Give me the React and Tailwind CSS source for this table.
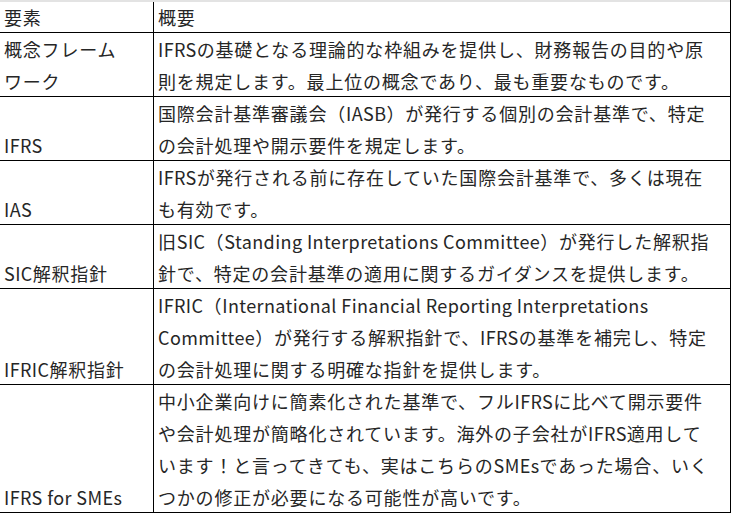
import React from "react";

const rows = [
  { left: ["概念フレーム", "ワーク"], right: ["IFRSの基礎となる理論的な枠組みを提供し、財務報告の目的や原", "則を規定します。最上位の概念であり、最も重要なものです。"], h: "h-[64px]" },
  { left: ["IFRS"], right: ["国際会計基準審議会（IASB）が発行する個別の会計基準で、特定", "の会計処理や開示要件を規定します。"], h: "h-[64px]" },
  { left: ["IAS"], right: ["IFRSが発行される前に存在していた国際会計基準で、多くは現在", "も有効です。"], h: "h-[64px]" },
  { left: ["SIC解釈指針"], right: ["旧SIC（Standing Interpretations Committee）が発行した解釈指", "針で、特定の会計基準の適用に関するガイダンスを提供します。"], h: "h-[64px]" },
  { left: ["IFRIC解釈指針"], right: ["IFRIC（International Financial Reporting Interpretations", "Committee）が発行する解釈指針で、IFRSの基準を補完し、特定", "の会計処理に関する明確な指針を提供します。"], h: "h-[96px]" },
  { left: ["IFRS for SMEs"], right: ["中小企業向けに簡素化された基準で、フルIFRSに比べて開示要件", "や会計処理が簡略化されています。海外の子会社がIFRS適用して", "います！と言ってきても、実はこちらのSMEsであった場合、いく", "つかの修正が必要になる可能性が高いです。"], h: "h-[128px]" },
];

function Runs({ text }) {
  const parts = text.match(/[\x20-\x7e]+|[^\x20-\x7e]+/g) || [];
  return parts.map((p, i) =>
    /^[\x20-\x7e]+$/.test(p) ? (
      <span key={i} className="tracking-[0.4px]">{p}</span>
    ) : (
      <span key={i} className="tracking-[0.8px]">{p}</span>
    )
  );
}

function Lines({ lines }) {
  return (
    <div className="flex flex-col justify-end h-full pl-1 overflow-visible">
      {lines.map((l, i) => (
        <div key={i} className="leading-[32px] h-[32px] shrink-0 whitespace-nowrap">
          <Runs text={l} />
        </div>
      ))}
    </div>
  );
}

export default function App() {
  return (
    <div
      className="w-[732px] h-[513px] bg-white text-[#262626] text-[18px] overflow-hidden"
      style={{ fontFamily: '"Noto Sans CJK JP", "Noto Sans", sans-serif' }}
    >
      <div className="w-[731px] border-r border-black">
        <div className="h-[2px] bg-[#e3e3e3]" />
        <div className="grid grid-cols-[154px_1fr] h-[31px] border-b border-black">
          <div className="border-r border-black pl-1 leading-[30px] whitespace-nowrap tracking-[0.8px]">要素</div>
          <div className="pl-1 leading-[30px] whitespace-nowrap tracking-[0.8px]">概要</div>
        </div>
        {rows.map((r, i) => (
          <div key={i} className={`grid grid-cols-[154px_1fr] border-b border-black ${r.h}`}>
            <div className="border-r border-black overflow-visible">
              <Lines lines={r.left} />
            </div>
            <div className="overflow-visible">
              <Lines lines={r.right} />
            </div>
          </div>
        ))}
      </div>
    </div>
  );
}
